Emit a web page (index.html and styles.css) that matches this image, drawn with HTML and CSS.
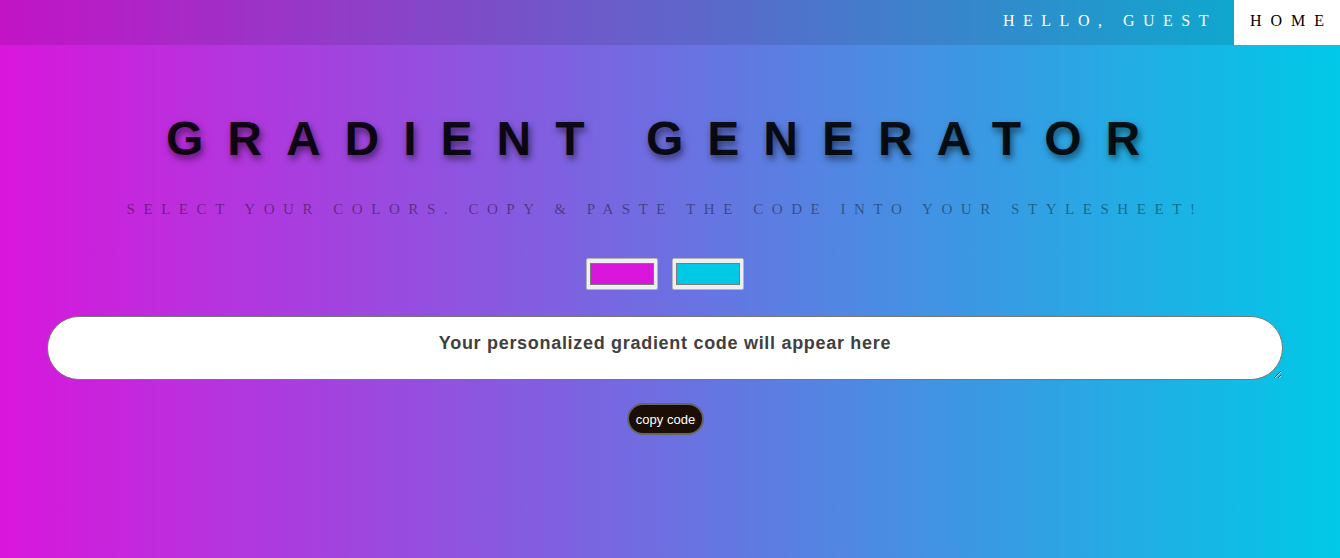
FILE: index.html
```html
<!DOCTYPE html>
<html>
<head>
<meta charset="utf-8">
<link rel="stylesheet" href="styles.css">
</head>
<body>
<nav class="nav">
  <span class="nav-hello">HELLO, GUEST</span>
  <a class="nav-home" href="#">HOME</a>
</nav>
<main class="main">
  <h1 class="title">GRADIENT GENERATOR</h1>
  <p class="subtitle">SELECT YOUR COLORS. COPY &amp; PASTE THE CODE INTO YOUR STYLESHEET!</p>
  <div class="pickers">
    <input class="picker" type="color" value="#d916dc">
    <input class="picker" type="color" value="#00c9e6">
  </div>
  <div class="code-wrap">
    <textarea class="code" placeholder="Your personalized gradient code will appear here"></textarea>
  </div>
  <button class="copy">copy code</button>
</main>
</body>
</html>
```
FILE: styles.css
```css
html, body {
  margin: 0;
  height: 100%;
}
body {
  background: linear-gradient(to right, #d916dc, #00c9e6);
  font-family: "Liberation Serif", serif;
  overflow: hidden;
}
.nav {
  height: 45px;
  background: rgba(0, 0, 0, 0.1);
  display: flex;
  justify-content: flex-end;
  align-items: stretch;
}
.nav-hello {
  color: #fff;
  font-size: 16px;
  letter-spacing: 8.5px;
  display: flex;
  align-items: center;
  padding: 0 17px 4px 0;
}
.nav-home {
  background: #fff;
  color: #000;
  text-decoration: none;
  font-size: 16px;
  letter-spacing: 9px;
  display: flex;
  align-items: center;
  padding: 0 0 4px 16px;
  width: 90px;
}
.main {
  display: flex;
  flex-direction: column;
  align-items: center;
  padding-right: 10px;
}
.title {
  margin: 64px 0 0 0;
  font-family: "Liberation Sans", Arial, sans-serif;
  font-size: 48px;
  font-weight: bold;
  letter-spacing: 24px;
  color: rgba(0, 0, 0, 0.88);
  text-shadow: 2px 4px 7px rgba(0, 0, 0, 0.55);
  line-height: 60px;
}
.subtitle {
  margin: 30px 0 0 0;
  font-size: 15px;
  letter-spacing: 8.55px;
  color: rgba(0, 0, 0, 0.42);
  line-height: 20px;
}
.pickers {
  display: flex;
  gap: 14px;
  margin-top: 39px;
}
.picker {
  width: 72px;
  height: 32px;
  margin: 0;
  padding: 4px 3px;
  border: 1px solid #b5b5b5;
  border-radius: 2px;
  background: #efefef;
  box-sizing: border-box;
}
.picker::-webkit-color-swatch-wrapper {
  padding: 0;
}
.picker::-webkit-color-swatch {
  border: 1px solid #7a7a7a;
  border-radius: 0;
}
.code-wrap {
  align-self: stretch;
  padding: 0 47px 0 47px;
  margin-top: 26px;
}
.code {
  display: block;
  width: 100%;
  height: 64px;
  box-sizing: border-box;
  border: 1px solid #777;
  border-radius: 32px;
  background: #fff;
  text-align: center;
  font-family: "Liberation Sans", Arial, sans-serif;
  font-weight: bold;
  font-size: 18px;
  letter-spacing: 0.7px;
  padding: 16px 20px;
  color: #333;
  outline: none;
}
.code::placeholder {
  color: #404040;
}
.copy {
  margin-top: 23px;
  width: 77px;
  height: 32px;
  border-radius: 16px;
  background: #1b0f05;
  color: #fff;
  border: 2px solid #666;
  font-family: "Liberation Sans", Arial, sans-serif;
  font-size: 13px;
  padding: 0;
  margin-left: 1px;
}
```
